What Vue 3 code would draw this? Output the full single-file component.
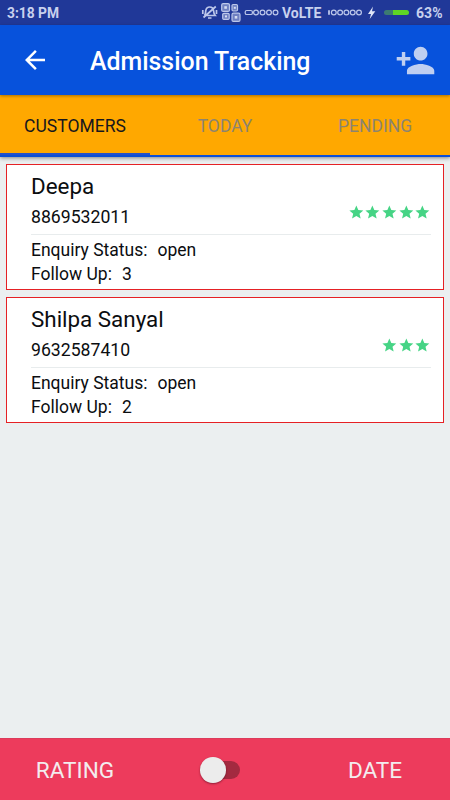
<script setup>
import { ref } from 'vue'

const tabs = ['CUSTOMERS', 'TODAY', 'PENDING']
const active = ref(0)
const byDate = ref(false)
const customers = [
  { name: 'Deepa', phone: '8869532011', stars: 5, status: 'open', followUp: 3 },
  { name: 'Shilpa Sanyal', phone: '9632587410', stars: 3, status: 'open', followUp: 2 },
]
</script>

<template>
  <div class="screen">
    <div class="status">
      <span class="clock">3:18 PM</span>
      <svg class="system" width="190" height="25" viewBox="0 0 190 25" fill="none" stroke="#bcc7ea">
        <g stroke-width="1.7">
          <path d="M4.500 15.500C5.800 14 5.500 12 5.800 10.500C6.300 8 8 7 9.700 7C12.400 7 13.300 8.500 13.500 10.500C13.700 13 14 14 15.200 15.500H4.500M8 18h3.500M3.500 17.500L15.800 6.500M2.800 10v4M16.500 10v4" />
        </g>
        <g fill="#6f80c2" stroke-width="1.2">
          <rect x="21.700" y="3.600" width="7.800" height="7.800" rx="1.500" />
          <rect x="32" y="4.500" width="5.500" height="6.500" rx="1.200" />
          <rect x="22.700" y="13.400" width="6.500" height="6" rx="1.200" />
          <rect x="32" y="13.200" width="8" height="8.200" rx="1.500" />
        </g>
        <g fill="#d5dcf2" stroke="none">
          <rect x="24.300" y="6.200" width="2.600" height="2.600" />
          <rect x="33.800" y="6.800" width="2" height="2" />
          <rect x="25" y="15.400" width="2" height="2" />
          <rect x="34.700" y="16" width="2.600" height="2.600" />
        </g>
        <g stroke-width="1.200">
          <rect x="45.200" y="10.500" width="7.200" height="4" rx="1.600" />
          <circle v-for="n in 4" :key="n" :cx="49.500 + n * 6.500" cy="12.500" r="2.400" />
          <path d="M129 10.300v4.400" stroke-width="1.800" />
          <circle v-for="n in 5" :key="'b' + n" :cx="127.500 + n * 6.300" cy="12.500" r="2.400" />
        </g>
        <path d="M173 6.500l-5 7.400h3l-1.300 5.200l5.600-7.900h-3.300z" fill="#e0e5f7" stroke="none" />
      </svg>
      <span class="volte">VoLTE</span>
      <span class="battery"></span>
      <span class="percent">63%</span>
    </div>

    <header class="bar">
      <svg class="back" viewBox="0 0 24 24" fill="#fff"><path d="M20 11H7.830l5.590-5.590L12 4l-8 8 8 8 1.410-1.410L7.830 13H20v-2z" /></svg>
      <h1>Admission Tracking</h1>
      <svg class="add" viewBox="0 0 24 24" fill="#bfcff1"><path d="M15 12c2.210 0 4-1.790 4-4s-1.790-4-4-4-4 1.790-4 4 1.790 4 4 4zm-9-2V7H4v3H1v2h3v3h2v-3h3v-2H6zm9 4c-2.670 0-8 1.340-8 4v2h16v-2c0-2.660-5.330-4-8-4z" /></svg>
    </header>

    <nav class="tabs">
      <div v-for="(tab, i) in tabs" :key="tab" class="tab" :class="{ active: active === i }" @click="active = i">{{ tab }}</div>
    </nav>

    <main class="list">
      <article v-for="c in customers" :key="c.phone" class="card">
        <h2>{{ c.name }}</h2>
        <div class="contact">
          <span>{{ c.phone }}</span>
          <div class="stars">
            <svg v-for="n in c.stars" :key="n" viewBox="0 0 24 24" fill="#46d485"><path d="M12 17.270L18.180 21l-1.640-7.030L22 9.240l-7.190-.61L12 2 9.190 8.630 2 9.240l5.460 4.730L5.820 21z" /></svg>
          </div>
        </div>
        <div class="detail first"><span>Enquiry Status:</span><span>{{ c.status }}</span></div>
        <div class="detail"><span>Follow Up:</span><span>{{ c.followUp }}</span></div>
      </article>
    </main>

    <footer class="sort">
      <span>RATING</span>
      <div class="switch" @click="byDate = !byDate"><i class="thumb"></i></div>
      <span>DATE</span>
    </footer>
  </div>
</template>

<style>
body { background: #ebeff0; }
</style>

<style scoped>
.screen { width: 450px; height: 800px; display: flex; flex-direction: column; overflow: hidden; background: #ebeff0; font-family: Roboto, sans-serif; color: #0b0d10; }
h1, h2 { margin: 0; }
.status { position: relative; height: 25px; flex: none; box-sizing: border-box; display: flex; align-items: center; justify-content: space-between; padding: 1px 8px 0 7px; background: #203898; color: #c8d1ee; font-size: 14px; font-weight: 700; line-height: 24px; }
.clock { font-size: 13.8px; }
.percent { font-size: 14px; margin-right: -.500px; }
.system { position: absolute; left: 200px; top: 0; }
.volte { position: absolute; left: 282px; top: 1px; }
.battery { position: absolute; left: 384px; top: 10px; width: 25px; height: 5px; border-radius: 3px; background: linear-gradient(90deg, #3c7b72 9px, #5ed525 9px); }
.bar { position: relative; z-index: 2; height: 70px; flex: none; box-sizing: border-box; display: flex; align-items: center; padding: 0 14.500px 0 20px; background: #0752dc; box-shadow: 0 1px 3px rgba(0, 0, 0, .35); }
.back { width: 30px; height: 30px; }
.bar h1 { flex: 1; margin-left: 40px; color: #fff; font-size: 24.900px; font-weight: 500; line-height: 30px; white-space: nowrap; padding-top: 3px; }
.add { width: 41px; height: 41px; }
.tabs { position: relative; z-index: 1; height: 62px; flex: none; box-sizing: border-box; display: flex; background: #ffa800; border-bottom: 2px solid #0b4fd8; box-shadow: 0 1px 4px rgba(0, 0, 0, .45); }
.tab { flex: 1; display: flex; align-items: center; justify-content: center; box-sizing: border-box; border-bottom: 2px solid transparent; padding-top: 3px; font-size: 17.500px; color: #8c8470; }
.tab.active { color: #17171d; border-color: #2451cb; }
.list { flex: 1; padding: 7px 6px 0; display: flex; flex-direction: column; gap: 7px; }
.card { height: 126px; box-sizing: border-box; border: 1px solid #e52125; background: #fff; padding: 6px 12px 0 24px; }
.card h2 { font-size: 22.400px; font-weight: 400; line-height: 30px; }
.contact { height: 34px; display: flex; align-items: flex-start; justify-content: space-between; border-bottom: 1px solid #e8eced; box-sizing: border-box; font-size: 17.650px; line-height: 33px; }
.stars { display: flex; padding-top: 3.300px; }
.stars svg { width: 16.700px; height: 16.700px; }
.detail { display: flex; gap: 10px; height: 24px; font-size: 17.500px; line-height: 24px; }
.detail.first { padding-top: 3px; }
.sort { height: 62px; flex: none; box-sizing: border-box; display: grid; grid-template-columns: 150px 150px 150px; align-items: center; justify-items: center; background: #ed3b5c; border-top: 1px solid #dc3b5b; color: #f3ecee; font-size: 22.600px; padding-top: 1px; }
.switch { width: 40px; height: 18px; margin-right: 10px; display: flex; align-items: center; border-radius: 9px; background: #a32a40; }
.thumb { width: 25.500px; height: 25.500px; border-radius: 50%; background: #ececec; box-shadow: 0 1px 2px rgba(60, 0, 20, .5); }
</style>
